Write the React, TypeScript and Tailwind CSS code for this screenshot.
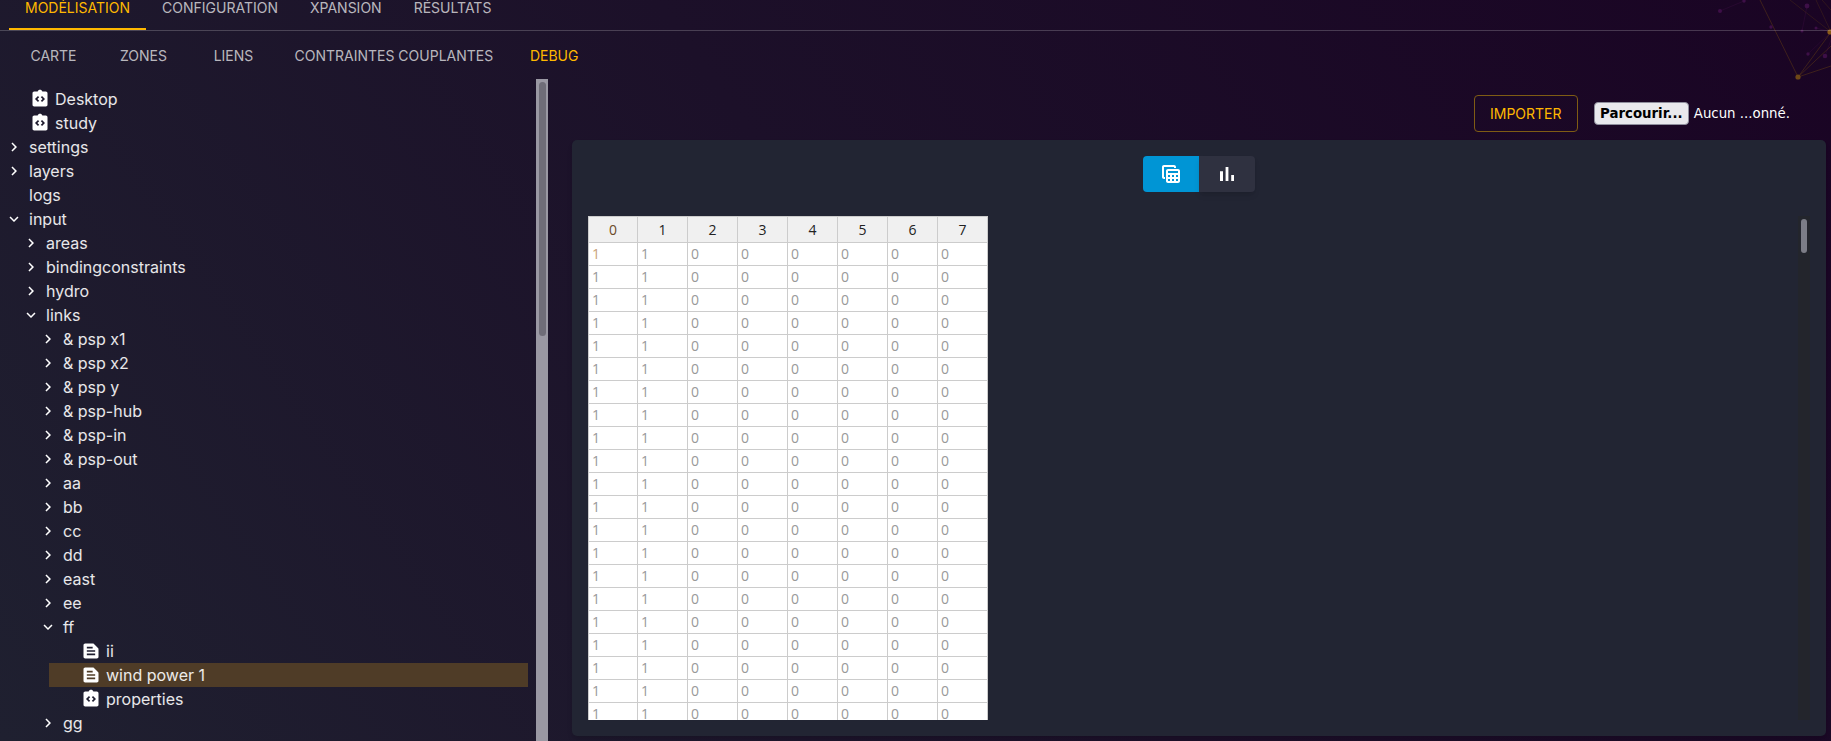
import type { ReactNode } from "react";

type TreeNode = {
  label: string;
  kind?: "json" | "text";
  open?: boolean;
  leaf?: boolean;
  selected?: boolean;
  children?: TreeNode[];
};

const mainTabs = ["Modélisation", "Configuration", "Xpansion", "Résultats"];
const subTabs = ["Carte", "Zones", "Liens", "Contraintes couplantes", "Debug"];

const folders = (names: string[]): TreeNode[] => names.map((label) => ({ label }));

const tree: TreeNode[] = [
  { label: "Desktop", kind: "json" },
  { label: "study", kind: "json" },
  { label: "settings" },
  { label: "layers" },
  { label: "logs", leaf: true },
  {
    label: "input",
    open: true,
    children: [
      ...folders(["areas", "bindingconstraints", "hydro"]),
      {
        label: "links",
        open: true,
        children: [
          ...folders([
            "& psp x1",
            "& psp x2",
            "& psp y",
            "& psp-hub",
            "& psp-in",
            "& psp-out",
            "aa",
            "bb",
            "cc",
            "dd",
            "east",
            "ee",
          ]),
          {
            label: "ff",
            open: true,
            children: [
              { label: "ii", kind: "text" },
              { label: "wind power 1", kind: "text", selected: true },
              { label: "properties", kind: "json" },
            ],
          },
          { label: "gg" },
        ],
      },
    ],
  },
];

const rowCount = 22;
const columns = [0, 1, 2, 3, 4, 5, 6, 7];

function JsonIcon() {
  return (
    <svg className="h-5 w-5 shrink-0 fill-white" viewBox="0 0 24 24" aria-hidden="true">
      <path
        fillRule="evenodd"
        d="M19 3h-4.18C14.4 1.84 13.3 1 12 1s-2.4.84-2.82 2H5c-1.1 0-2 .9-2 2v14c0 1.1.9 2 2 2h14c1.1 0 2-.9 2-2V5c0-1.1-.9-2-2-2zM11 14.17l-1.41 1.42L6 12l3.59-3.59L11 9.83 8.83 12 11 14.17zm3.41 1.42L13 14.17 15.17 12 13 9.83l1.41-1.42L18 12l-3.59 3.59z"
      />
    </svg>
  );
}

function TextIcon() {
  return (
    <svg className="h-5 w-5 shrink-0 fill-white" viewBox="0 0 24 24" aria-hidden="true">
      <path d="M20.41 8.41l-4.83-4.83c-.37-.37-.88-.58-1.41-.58H5c-1.1 0-2 .9-2 2v14c0 1.1.9 2 2 2h14c1.1 0 2-.9 2-2V9.83c0-.53-.21-1.04-.59-1.42zM7 7h7v2H7V7zm10 10H7v-2h10v2zm0-4H7v-2h10v2z" />
    </svg>
  );
}

function Chevron({ open }: { open?: boolean }) {
  return (
    <svg className="h-[18px] w-[18px] shrink-0 fill-white" viewBox="0 0 24 24" aria-hidden="true">
      <path d={open ? "M16.59 8.59 12 13.17 7.41 8.59 6 10l6 6 6-6z" : "M10 6 8.59 7.41 13.17 12l-4.58 4.59L10 18l6-6z"} />
    </svg>
  );
}

function TreeRow({ node }: { node: TreeNode }) {
  let content: ReactNode;
  if (node.kind) {
    content = (
      <span className="flex items-center gap-[5px] pl-[32px]">
        {node.kind === "json" ? <JsonIcon /> : <TextIcon />}
        <span>{node.label}</span>
      </span>
    );
  } else {
    content = (
      <span className="flex items-center gap-[6px] pl-[7px]">
        {node.leaf ? <span className="w-[18px]" /> : <Chevron open={node.open} />}
        <span>{node.label}</span>
      </span>
    );
  }
  return (
    <div>
      <div className={`flex h-6 items-center text-[16px] text-white/90 ${node.selected ? "bg-[#4f3c27]" : ""}`}>
        {content}
      </div>
      {node.children && (
        <div className="ml-[17px]">
          {node.children.map((child) => (
            <TreeRow key={child.label} node={child} />
          ))}
        </div>
      )}
    </div>
  );
}

function NetworkDecoration() {
  return (
    <svg className="absolute top-0 right-0 h-[90px] w-[131px]" viewBox="1700 0 131 90" aria-hidden="true">
      <g stroke="#6b4413" strokeOpacity="0.55" strokeWidth="0.8" fill="none">
        <path d="M1798 77 1760 0M1798 77 1831 32M1798 77 1831 46M1798 77 1831 66" />
        <path d="M1831 32 1790 0M1831 32 1816 0M1831 10 1822 0" strokeOpacity="0.35" />
      </g>
      <g stroke="#4a1450" strokeOpacity="0.45" strokeWidth="0.6" fill="none">
        <path d="M1720 11 1744 1M1807 6 1802 31M1816 28 1831 32M1808 54 1831 32M1825 56 1831 40" />
      </g>
      <circle cx="1798" cy="77" r="2.6" fill="#6e4716" />
      <circle cx="1830" cy="32" r="2.6" fill="#8a5a18" />
      <g fill="#3d0f47">
        <circle cx="1720" cy="11" r="2" />
        <circle cx="1744" cy="1" r="1.7" />
        <circle cx="1807" cy="6" r="2.4" />
        <circle cx="1771" cy="27" r="1.7" />
        <circle cx="1802" cy="31" r="1.5" />
        <circle cx="1816" cy="28" r="1.5" />
        <circle cx="1808" cy="54" r="1.7" />
        <circle cx="1825" cy="56" r="2.3" />
      </g>
    </svg>
  );
}

export default function App() {
  return (
    <div className="relative flex h-[741px] w-full flex-col overflow-hidden bg-[linear-gradient(235deg,#1a0424_0%,#1c1029_50%,#1f2030_100%)] font-['Inter',sans-serif]">
      <NetworkDecoration />

      <div className="relative flex h-[31px] shrink-0 items-start border-b border-white/20 pl-[9px]">
        {mainTabs.map((tab, index) => (
          <div
            key={tab}
            className={`h-[30px] border-b-2 px-4 text-[14px] leading-4 uppercase ${
              index === 0 ? "border-[#ffb800] text-[#ffb800]" : "border-transparent text-white/70"
            }`}
          >
            {tab}
          </div>
        ))}
      </div>

      <div className="relative flex h-12 shrink-0 items-center pl-[8.5px]">
        {subTabs.map((tab, index) => (
          <div
            key={tab}
            className={`flex h-full min-w-[90px] items-center justify-center px-4 text-[14px] uppercase ${
              index === 4 ? "text-[#ffb800]" : "text-white/70"
            }`}
          >
            {tab}
          </div>
        ))}
      </div>

      <div className="flex min-h-0 flex-1">
        <div className="flex w-[548px] shrink-0">
          <div className="w-[536px] overflow-hidden pt-2">
            <div className="-ml-[2px] w-[530px]">
              {tree.map((node) => (
                <TreeRow key={node.label} node={node} />
              ))}
            </div>
          </div>
          <div className="w-3 bg-[#9a98a3] pt-[3px]">
            <div className="mx-auto h-[254px] w-[7px] rounded-full bg-[#6f6d78]" />
          </div>
        </div>

        <div className="flex min-w-0 flex-1 flex-col pt-4 pr-[5px] pb-[5px] pl-6">
          <div className="flex h-[37px] shrink-0 items-center justify-end pr-[36px]">
            <div className="flex h-[37px] w-[104px] items-center justify-center rounded border border-[#7f5c14] text-[14px] text-[#ffb800]">
              IMPORTER
            </div>
            <div className="ml-4 flex items-center font-['DejaVu_Sans',sans-serif] text-[13.33px] text-white">
              <div className="flex h-[23px] w-[95px] items-center justify-center rounded border border-[#8f8f9d] bg-[#e9e9ed] font-bold text-black">
                Parcourir...
              </div>
              <span className="ml-[5px]">Aucun ...onné.</span>
            </div>
          </div>

          <div className="mt-2 flex min-h-0 flex-1 flex-col rounded-[5px] bg-[#222533] pt-4 pb-4 pl-4 shadow-md">
            <div className="mr-4 flex h-9 shrink-0 justify-center">
              <div className="flex h-9 w-14 items-center justify-center rounded-l bg-[#0095d5]">
                <svg className="h-6 w-6 fill-white" viewBox="0 0 24 24" aria-hidden="true">
                  <path d="M19 7H9c-1.1 0-2 .9-2 2v10c0 1.1.9 2 2 2h10c1.1 0 2-.9 2-2V9c0-1.1-.9-2-2-2zm0 2v2H9V9h10zm-6 6v-2h2v2h-2zm2 2v2h-2v-2h2zm-4-2H9v-2h2v2zm6-2h2v2h-2v-2zm-8 4h2v2H9v-2zm8 2v-2h2v2h-2zM6 17H5c-1.1 0-2-.9-2-2V5c0-1.1.9-2 2-2h10c1.1 0 2 .9 2 2v1h-2V5H5v10h1v2z" />
                </svg>
              </div>
              <div className="flex h-9 w-14 items-center justify-center rounded-r bg-[#2f3140] shadow-md">
                <svg className="h-6 w-6 fill-white" viewBox="0 0 24 24" aria-hidden="true">
                  <path d="M5 9.2h3V19H5zM10.6 5h2.8v14h-2.8zm5.6 8H19v6h-2.8z" />
                </svg>
              </div>
            </div>

            <div className="mt-6 flex min-h-0 flex-1">
              <div className="min-w-0 flex-1 overflow-hidden">
                <table className="w-[399px] table-fixed border-collapse font-['Open_Sans',sans-serif] text-[14px]">
                  <thead>
                    <tr className="h-[26px] bg-[#f0f0f0] text-[#222]">
                      {columns.map((col) => (
                        <th
                          key={col}
                          className={`border border-[#ccc] p-0 font-normal ${col === 0 ? "w-[49px] text-[#6b4a28]" : "w-[50px]"}`}
                        >
                          {col}
                        </th>
                      ))}
                    </tr>
                  </thead>
                  <tbody>
                    {Array.from({ length: rowCount }).map((_, row) => (
                      <tr key={row} className="h-[23px] bg-white text-[#999]">
                        {columns.map((col) => (
                          <td
                            key={col}
                            className={`border border-[#ccc] p-0 pl-[3px] leading-[22px] ${row === 0 && col === 0 ? "text-[#c9a27a]" : ""}`}
                          >
                            {col < 2 ? 1 : 0}
                          </td>
                        ))}
                      </tr>
                    ))}
                  </tbody>
                </table>
              </div>
              <div className="mr-4 w-3 shrink-0 bg-[#23252c] pt-[3px]">
                <div className="mx-auto h-[34px] w-[6px] rounded-full bg-[#7c7d86]" />
              </div>
            </div>
          </div>
        </div>
      </div>
    </div>
  );
}
